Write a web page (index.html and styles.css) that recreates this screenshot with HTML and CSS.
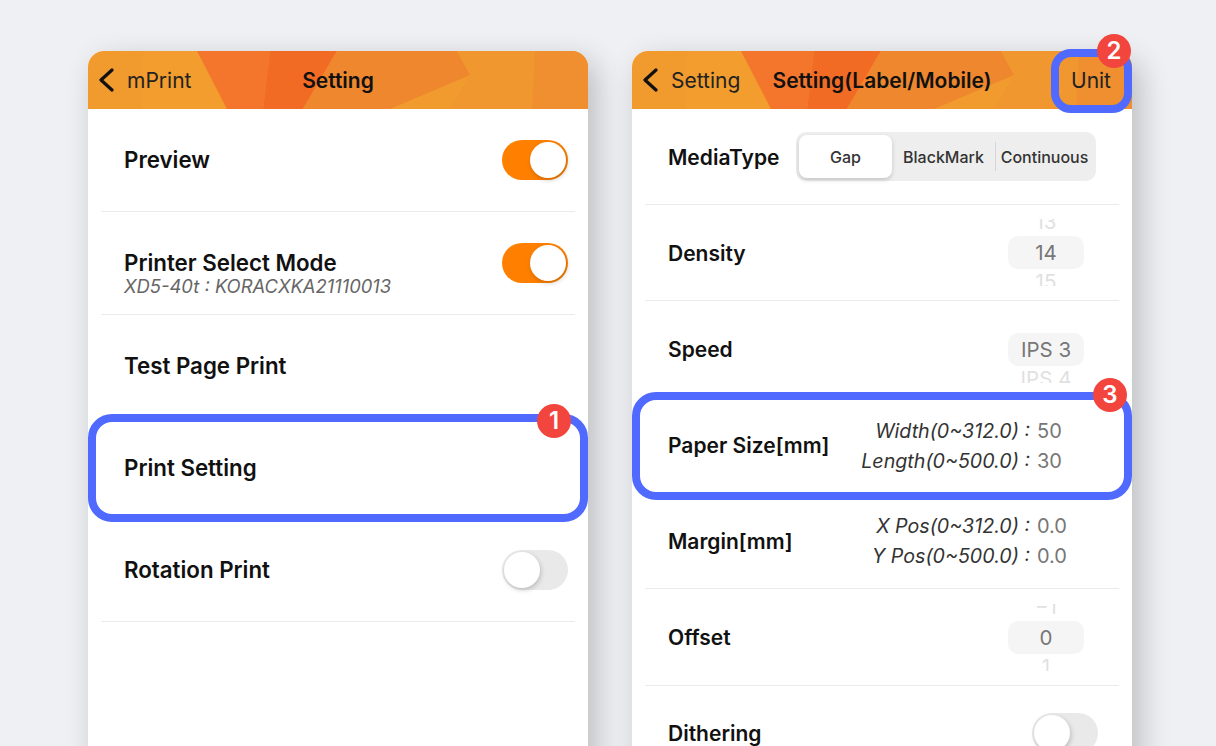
FILE: index.html
```html
<!DOCTYPE html>
<html lang="en">
<head>
    <meta charset="UTF-8">
    <title>mPrint Setting</title>
    <link rel="stylesheet" href="styles.css">
</head>
<body>
    <div class="screen">
        <div class="app-header">
            <svg class="header-bg" viewBox="0 0 500 58" preserveAspectRatio="none" aria-hidden="true">
                <rect width="500" height="58" fill="#f19a2d"/>
                <polygon points="55,0 109,0 139,58 53,58" fill="#f29d2d"/>
                <polygon points="109,0 182,0 175,58 139,58" fill="#f3762c"/>
                <polygon points="182,0 249,0 215,58 175,58" fill="#f26b25"/>
                <polygon points="249,0 369,0 382,24 302,58 215,58" fill="#ef872e"/>
                <polygon points="369,0 447,0 444,58 362,58 382,24" fill="#f0982f"/>
                <polygon points="447,0 500,0 500,58 444,58" fill="#ef8f30"/>
            </svg>
            <div class="nav-left">
                <svg class="back-icon" viewBox="0 0 16 26" aria-hidden="true"><path d="M14 3 3 13l11 10"/></svg>
                <span>mPrint</span>
            </div>
            <div class="nav-title">Setting</div>
        </div>

        <div class="row row-tall">
            <span class="label">Preview</span>
            <span class="toggle on"></span>
        </div>
        <div class="row row-tall">
            <div class="label-block">
                <div class="label">Printer Select Mode</div>
                <div class="sub">XD5-40t : KORACXKA21110013</div>
            </div>
            <span class="toggle on"></span>
        </div>
        <div class="row row-tall no-line">
            <span class="label">Test Page Print</span>
        </div>
        <div class="row row-tall no-line">
            <span class="label">Print Setting</span>
            <div class="highlight"></div>
            <div class="badge badge-1">1</div>
        </div>
        <div class="row row-tall">
            <span class="label">Rotation Print</span>
            <span class="toggle"></span>
        </div>
    </div>

    <div class="screen">
        <div class="app-header">
            <svg class="header-bg" viewBox="0 0 500 58" preserveAspectRatio="none" aria-hidden="true">
                <rect width="500" height="58" fill="#f19a2d"/>
                <polygon points="55,0 109,0 139,58 53,58" fill="#f29d2d"/>
                <polygon points="109,0 182,0 175,58 139,58" fill="#f3762c"/>
                <polygon points="182,0 249,0 215,58 175,58" fill="#f26b25"/>
                <polygon points="249,0 369,0 382,24 302,58 215,58" fill="#ef872e"/>
                <polygon points="369,0 447,0 444,58 362,58 382,24" fill="#f0982f"/>
                <polygon points="447,0 500,0 500,58 444,58" fill="#ef8f30"/>
            </svg>
            <div class="nav-left">
                <svg class="back-icon" viewBox="0 0 16 26" aria-hidden="true"><path d="M14 3 3 13l11 10"/></svg>
                <span>Setting</span>
            </div>
            <div class="nav-title">Setting(Label/Mobile)</div>
            <div class="nav-right">Unit</div>
            <div class="highlight highlight-unit"></div>
            <div class="badge badge-2">2</div>
        </div>

        <div class="row">
            <span class="label">MediaType</span>
            <div class="segments">
                <span class="segment selected">Gap</span>
                <span class="segment">BlackMark</span>
                <span class="segment divided">Continuous</span>
            </div>
        </div>
        <div class="row">
            <span class="label">Density</span>
            <div class="picker">
                <span class="faded">13</span>
                <span class="current">14</span>
                <span class="faded">15</span>
            </div>
        </div>
        <div class="row no-line">
            <span class="label">Speed</span>
            <div class="picker">
                <span class="faded"></span>
                <span class="current">IPS 3</span>
                <span class="faded">IPS 4</span>
            </div>
        </div>
        <div class="row no-line">
            <span class="label">Paper Size[mm]</span>
            <div class="fields">
                <span class="field-name">Width(0~312.0) :</span><span class="field-value">50</span>
                <span class="field-name">Length(0~500.0) :</span><span class="field-value">30</span>
            </div>
            <div class="highlight highlight-paper"></div>
            <div class="badge badge-3">3</div>
        </div>
        <div class="row">
            <span class="label">Margin[mm]</span>
            <div class="fields">
                <span class="field-name">X Pos(0~312.0) :</span><span class="field-value">0.0</span>
                <span class="field-name">Y Pos(0~500.0) :</span><span class="field-value">0.0</span>
            </div>
        </div>
        <div class="row">
            <span class="label">Offset</span>
            <div class="picker">
                <span class="faded">−1</span>
                <span class="current">0</span>
                <span class="faded">1</span>
            </div>
        </div>
        <div class="row">
            <span class="label">Dithering</span>
            <span class="toggle toggle-inset"></span>
        </div>
    </div>
</body>
</html>
```

FILE: styles.css
```css
* {
    margin: 0;
    padding: 0;
    box-sizing: border-box;
}

html, body {
    height: 100%;
    overflow: hidden;
}

body {
    font-family: Inter, "Liberation Sans", sans-serif;
    background-color: #eff0f3;
    color: #111;
    display: flex;
    align-items: flex-start;
    gap: 44px;
    padding: 51px 0 0 88px;
}

.screen {
    width: 500px;
    height: 760px;
    flex-shrink: 0;
    background: #fff;
    border-radius: 16px 16px 0 0;
    box-shadow: 8px 10px 30px rgba(0, 0, 0, 0.22);
}

.app-header {
    position: relative;
    height: 58px;
    display: flex;
    align-items: center;
    justify-content: space-between;
    padding: 0 21px 0 10px;
    font-size: 21px;
}

.header-bg {
    position: absolute;
    top: 0;
    left: 0;
    width: 100%;
    height: 100%;
    border-radius: 16px 16px 0 0;
}

.nav-left, .nav-right {
    position: relative;
    color: #222;
}

.nav-left {
    display: flex;
    align-items: center;
    gap: 13px;
}

.nav-title {
    position: absolute;
    left: 0;
    right: 0;
    text-align: center;
    font-weight: 600;
}

.back-icon {
    width: 16px;
    height: 26px;
    fill: none;
    stroke: #111;
    stroke-width: 3.2;
    stroke-linecap: round;
    stroke-linejoin: round;
}

.row {
    position: relative;
    height: 96.1px;
    margin: 0 13px;
    padding: 0 7px 0 23px;
    display: flex;
    align-items: center;
    justify-content: space-between;
    border-bottom: 1px solid #ebebeb;
}

.row-tall {
    height: 102.8px;
}

.row-tall.no-line {
    height: 102.4px;
}

.no-line {
    border-bottom: none;
}

.label {
    font-size: 21px;
    line-height: 26px;
    font-weight: 600;
    padding-top: 2px;
}

.row-tall .label {
    font-size: 22.3px;
    padding-top: 0;
}

.label-block {
    margin-top: 20px;
}

.sub {
    font-size: 18.4px;
    line-height: 20px;
    font-style: italic;
    color: #666;
}

.toggle {
    position: relative;
    width: 66px;
    height: 40px;
    border-radius: 20px;
    background: #e9e9e9;
}

.toggle::after {
    content: "";
    position: absolute;
    top: 2px;
    left: 2px;
    width: 36px;
    height: 36px;
    border-radius: 50%;
    background: #fff;
    box-shadow: 1px 2px 5px rgba(0, 0, 0, 0.2);
}

.toggle.on {
    background: #ff8000;
}

.toggle.on::after {
    left: 28px;
}

.toggle-inset {
    margin-right: 14px;
}

.highlight {
    position: absolute;
    top: -3px;
    left: -13px;
    right: -13px;
    bottom: -3px;
    border: 8px solid #5069ff;
    border-radius: 24px;
}

.highlight-paper {
    top: -5.3px;
    bottom: -6.5px;
}

.highlight-unit {
    top: -2px;
    left: 419px;
    right: 0;
    bottom: -4px;
    border-radius: 20px;
}

.badge {
    position: absolute;
    width: 34px;
    height: 34px;
    border-radius: 50%;
    background: #f2453d;
    color: #fff;
    font-size: 24px;
    line-height: 34px;
    font-weight: 600;
    text-align: center;
}

.badge-1 {
    top: -13px;
    right: 4px;
}

.badge-2 {
    top: -17px;
    right: 1px;
}

.badge-3 {
    top: -19px;
    right: -8px;
}

.segments {
    width: 300px;
    height: 49px;
    margin-right: 16px;
    padding: 3px 2px 3px 3px;
    display: grid;
    grid-template-columns: 93px 103px 1fr;
    align-items: center;
    background: #eee;
    border-radius: 10px;
    font-size: 16px;
    font-weight: 500;
    color: #333;
    text-align: center;
}

.segment {
    height: 100%;
    display: flex;
    align-items: center;
    justify-content: center;
}

.segment.selected {
    background: #fff;
    border-radius: 8px;
    box-shadow: 0 2px 4px rgba(0, 0, 0, 0.18);
}

.segment.divided {
    position: relative;
}

.segment.divided::before {
    content: "";
    position: absolute;
    left: 0;
    top: 7px;
    bottom: 7px;
    width: 1px;
    background: #d6d6d6;
}

.picker {
    width: 76px;
    height: 67px;
    margin-right: 28px;
    overflow: hidden;
    display: grid;
    grid-template-rows: 17px 33px 17px;
    font-size: 20.5px;
    text-align: center;
    color: #777;
}

.picker .current {
    line-height: 33px;
    background: #f5f5f5;
    border-radius: 10px;
}

.picker .faded {
    opacity: 0.22;
}

.picker .faded:first-child {
    line-height: 6px;
}

.picker .faded:last-child {
    line-height: 26px;
}

.fields {
    display: grid;
    grid-template-columns: auto 75px;
    column-gap: 7px;
    font-size: 20px;
    line-height: 30px;
    padding-top: 1px;
}

.field-name {
    font-size: 19.65px;
    font-style: italic;
    text-align: right;
    color: #333;
}

.field-value {
    color: #777;
}
```
